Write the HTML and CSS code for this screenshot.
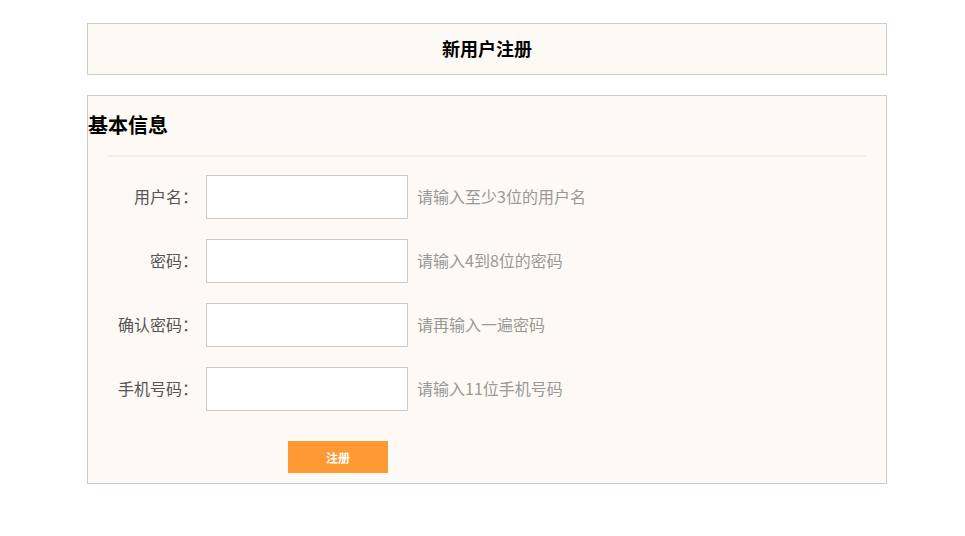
FILE: index.html
```html
<!DOCTYPE html>
<html lang="zh">
<head>
<meta charset="utf-8">
<title>新用户注册</title>
<link rel="stylesheet" href="styles.css">
</head>
<body>
<div class="page">
  <div class="title-box">新用户注册</div>
  <form class="form-box">
    <h3 class="section-title">基本信息</h3>
    <div class="divider"></div>
    <div class="rows">
      <div class="row">
        <label class="label">用户名：</label>
        <input class="field" type="text">
        <span class="hint">请输入至少3位的用户名</span>
      </div>
      <div class="row">
        <label class="label">密码：</label>
        <input class="field" type="password">
        <span class="hint">请输入4到8位的密码</span>
      </div>
      <div class="row">
        <label class="label">确认密码：</label>
        <input class="field" type="password">
        <span class="hint">请再输入一遍密码</span>
      </div>
      <div class="row">
        <label class="label">手机号码：</label>
        <input class="field" type="text">
        <span class="hint">请输入11位手机号码</span>
      </div>
    </div>
    <div class="actions">
      <button class="submit" type="button">注册</button>
    </div>
  </form>
</div>
</body>
</html>
```
FILE: styles.css
```css
* { box-sizing: border-box; }
body {
  margin: 0;
  background: #fff;
  font-family: "Noto Sans CJK SC", "Liberation Sans", sans-serif;
}
.page {
  width: 800px;
  margin-left: 87px;
  padding-top: 23px;
}
.title-box {
  height: 52px;
  border: 1px solid #ccc;
  background: #fdf9f4;
  display: flex;
  align-items: center;
  justify-content: center;
  padding-bottom: 3px;
  font-size: 18px;
  font-weight: bold;
  color: #000;
}
.form-box {
  margin: 20px 0 0;
  border: 1px solid #ccc;
  background: #fdf9f4;
  padding: 0 0 10px;
}
.section-title {
  margin: 19px 0 0;
  font-size: 20px;
  line-height: 20px;
  font-weight: bold;
  color: #000;
}
.divider {
  margin: 20px 20px 0;
  height: 2px;
  background: #f3eee8;
}
.rows {
  display: flex;
  flex-direction: column;
  gap: 20px;
  padding-top: 18px;
}
.row {
  display: flex;
  align-items: center;
  height: 44px;
}
.label {
  width: 118px;
  padding-right: 8px;
  padding-bottom: 3px;
  text-align: right;
  font-size: 16px;
  color: #555;
  white-space: nowrap;
}
.field {
  width: 202px;
  height: 44px;
  border: 1px solid #ccc;
  background: #fff;
  margin: 0;
  outline: none;
}
.hint {
  margin-left: 9px;
  padding-bottom: 3px;
  font-size: 16px;
  color: #999;
}
.actions {
  padding: 30px 0 0 200px;
}
.submit {
  display: block;
  width: 100px;
  height: 32px;
  border: none;
  background: #ff9933;
  color: #fff;
  font-weight: bold;
  font-size: 12px;
  font-family: "Noto Sans CJK SC", sans-serif;
  padding: 0;
}
```
